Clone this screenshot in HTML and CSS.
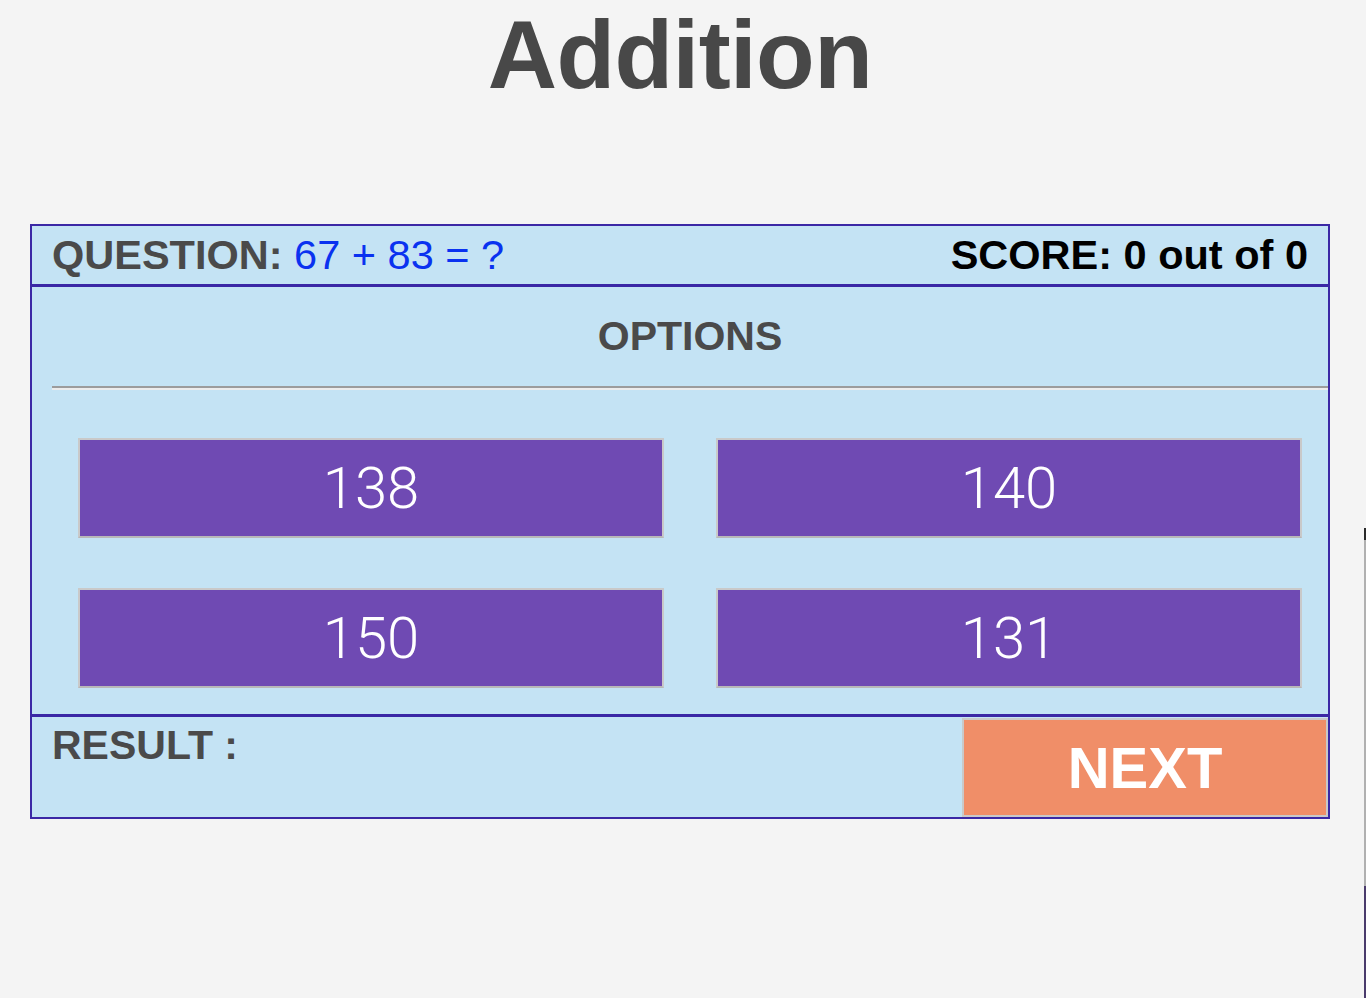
FILE: index.html
```html
<!DOCTYPE html>
<html lang="en">
<head>
<meta charset="utf-8">
<title>Addition</title>
<link rel="stylesheet" href="styles.css">
</head>
<body>
<div class="page">
  <h1 class="title">Addition</h1>
  <div class="panel">
    <div class="header">
      <div class="question">QUESTION: <span class="expr">67 + 83 = ?</span></div>
      <div class="score">SCORE: 0 out of 0</div>
    </div>
    <div class="options">
      <h2 class="options-title">OPTIONS</h2>
      <hr class="rule">
      <div class="grid">
        <button class="opt">138</button>
        <button class="opt">140</button>
        <button class="opt">150</button>
        <button class="opt">131</button>
      </div>
    </div>
    <div class="result">
      <div class="result-label">RESULT :</div>
      <button class="next">NEXT</button>
    </div>
  </div>
</div>
<div class="edge"></div>
</body>
</html>
```
FILE: styles.css
```css
html, body {
  margin: 0;
  padding: 0;
  background: #f4f4f4;
  font-family: "Liberation Sans", Arial, sans-serif;
}

.page {
  width: 1300px;
  margin-left: 30px;
}

.title {
  margin: 0;
  font-size: 96px;
  line-height: normal;
  font-weight: bold;
  color: #484848;
  text-align: center;
  letter-spacing: -0.6px;
}

.panel {
  margin-top: 114px;
  box-sizing: border-box;
  width: 1300px;
  border: 2px solid #3b28a5;
  background: #c4e3f4;
}

.header {
  display: flex;
  justify-content: space-between;
  align-items: center;
  height: 58px;
  padding: 0 20px;
  border-bottom: 3px solid #3b28a5;
  font-size: 41.5px;
  line-height: 58px;
  font-weight: bold;
}

.question {
  color: #4a4a4a;
}

.expr {
  color: #0a32f0;
  font-weight: normal;
}

.score {
  color: #000;
}

.options {
  padding: 0 0 1px 20px;
  border-bottom: 3px solid #3b28a5;
}

.options-title {
  margin: 0;
  padding: 26px 0;
  font-size: 41px;
  line-height: 47px;
  font-weight: bold;
  color: #4a4a4a;
  text-align: center;
}

.rule {
  margin: 0;
  height: 0;
  border: 0;
  border-top: 2px solid #9c9c9c;
  border-bottom: 2px solid #ececec;
}

.grid {
  display: grid;
  grid-template-columns: 1fr 1fr;
  padding-top: 23px;
}

.opt {
  margin: 25px 26px;
  height: 100px;
  box-sizing: border-box;
  border: 2px solid #c9c9c9;
  border-bottom-color: #b8b8b8;
  background: #6f4ab3;
  color: #fff;
  font-family: Roboto, "Liberation Sans", sans-serif;
  font-weight: 300;
  font-size: 58px;
  padding: 0;
}

.result {
  display: flex;
  justify-content: space-between;
  align-items: flex-start;
  height: 100px;
}

.result-label {
  padding: 5px 0 0 20px;
  font-size: 41px;
  line-height: 47px;
  font-weight: bold;
  color: #4a4a4a;
}

.next {
  margin-top: 1px;
  width: 366px;
  height: 99px;
  box-sizing: border-box;
  border: 2px solid #c9c9c9;
  background: #f08e68;
  color: #fff;
  font-family: "Liberation Sans", Arial, sans-serif;
  font-weight: bold;
  font-size: 58px;
  padding: 0;
}

.edge {
  position: fixed;
  right: 0;
  top: 528px;
  bottom: 0;
  width: 2px;
  background: linear-gradient(to bottom, #2a2a2a 0, #2a2a2a 12px, #b0b0b0 12px, #b0b0b0 358px, #4a3b6c 358px);
}
```
